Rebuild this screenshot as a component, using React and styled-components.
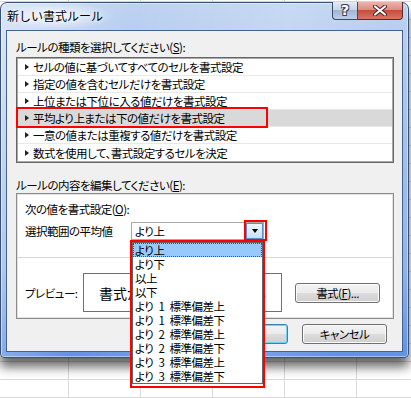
import React from "react";
import styled, { createGlobalStyle } from "styled-components";

const GlobalStyle = createGlobalStyle`
  body {
    margin: 0;
    font-family: "Noto Sans CJK JP", "Noto Sans", sans-serif;
    font-size: 11.5px;
    letter-spacing: -0.5px;
    color: #000;
  }
`;

const Page = styled.div`
  width: 411px;
  height: 398px;
  overflow: hidden;
  box-sizing: border-box;
  padding-top: 2px;
  background-color: #fff;
  background-image: linear-gradient(to right, #dadada 1px, transparent 1px),
    linear-gradient(to bottom, #dadada 1px, transparent 1px);
  background-size: 72px 18px;
  background-position: 68px 1px;
`;

const Window = styled.div`
  width: 409px;
  box-sizing: border-box;
  border: 1px solid #3a5076;
  border-radius: 7px 7px 4px 4px;
  padding: 0 5px 5px 5px;
  background: linear-gradient(100deg, rgba(255, 255, 255, 0.45) 0%, rgba(255, 255, 255, 0) 28%, rgba(255, 255, 255, 0.18) 62%, rgba(255, 255, 255, 0) 85%),
    linear-gradient(to bottom, #bcd2f0 0%, #a3c0ea 40%, #8fb3e8 75%, #5f93e4 100%);
  box-shadow: 0 9px 11px rgba(0, 0, 0, 0.6), inset 0 0 0 1px rgba(255, 255, 255, 0.45);
`;

const TitleBar = styled.div`
  height: 27px;
  display: flex;
  align-items: flex-start;
  padding-left: 1px;
`;

const Title = styled.span`
  line-height: 26px;
  font-size: 12px;
  letter-spacing: 0;
  padding: 0 10px 0 0;
  background: radial-gradient(ellipse at 45% 50%, rgba(255, 255, 255, 0.8) 0%, rgba(255, 255, 255, 0) 72%);
  text-shadow: 0 0 4px #fff;
`;

const CaptionButtons = styled.div`
  margin-left: auto;
  display: flex;
  margin-top: -1px;
`;

const HelpButton = styled.div`
  width: 26px;
  height: 18px;
  box-sizing: border-box;
  border: 1px solid #3b4c6b;
  border-top: none;
  border-radius: 0 0 0 4px;
  background: linear-gradient(#e3ebf6 0%, #c6d5ea 45%, #a2b7d6 50%, #bccde6 100%);
  color: #fff;
  font: bold 14px "DejaVu Sans", sans-serif;
  letter-spacing: 0;
  line-height: 17px;
  text-align: center;
  text-shadow: 1px 1px 0 #3a4660, -1px -1px 0 #3a4660, 1px -1px 0 #3a4660, -1px 1px 0 #3a4660;
`;

const CloseButton = styled.div`
  width: 45px;
  height: 18px;
  box-sizing: border-box;
  border: 1px solid #5c2a2a;
  border-top: none;
  border-left: none;
  border-radius: 0 0 4px 0;
  background: linear-gradient(#ebb4aa 0%, #dc8e80 45%, #c64d3c 50%, #d97566 100%);
  display: flex;
  align-items: center;
  justify-content: center;
`;

const Client = styled.div`
  border: 1px solid #45628f;
  background: #f0f0f0;
  padding: 8px 8px 7px 9px;
`;

const Label = styled.div`
  line-height: 16px;
  height: 16px;
  font-feature-settings: "palt";
  margin-top: ${(p) => p.$top || 0}px;
  white-space: nowrap;
`;

const ListBox = styled.div`
  margin-top: 2px;
  border: 1px solid #666;
  box-shadow: inset 0 0 0 1px #a9a9a9;
  padding: 1px;
  background: #fff;
`;

const RuleRow = styled.div`
  position: relative;
  height: 17px;
  box-sizing: border-box;
  display: flex;
  align-items: center;
  padding-left: 7px;
  border-bottom: ${(p) => (p.$last ? "none" : "1px solid #e8e8e8")};
  background: ${(p) => (p.$selected ? "#d9d9d9" : "#fff")};
  font-feature-settings: "palt";
  white-space: nowrap;
`;

const Arrow = styled.span`
  width: 0;
  height: 0;
  border-left: 4px solid #222;
  border-top: 3.5px solid transparent;
  border-bottom: 3.5px solid transparent;
  margin-right: 4px;
`;

const RedMark = styled.span`
  position: absolute;
  box-sizing: border-box;
  border: 2px solid #ff0000;
  left: ${(p) => p.$left}px;
  top: ${(p) => p.$top}px;
  width: ${(p) => p.$width}px;
  height: ${(p) => p.$height}px;
  z-index: 5;
  pointer-events: none;
`;

const GroupBox = styled.div`
  border: 1px solid #8b8b8b;
  box-shadow: inset 0 0 0 1px #e2e2e2;
  background: #fff;
`;

const GroupTop = styled.div`
  padding: 7px 8px 17px 8px;
  border-bottom: 1px solid #d8d8d8;
`;

const FieldRow = styled.div`
  display: flex;
  align-items: center;
  margin-top: ${(p) => p.$top || 0}px;
`;

const FieldLabel = styled.span`
  width: ${(p) => p.$width}px;
  flex: none;
  font-feature-settings: "palt";
  white-space: nowrap;
  line-height: 16px;
`;

const Combo = styled.div`
  position: relative;
  width: 133px;
  height: 18px;
  box-sizing: border-box;
  border: 1px solid #a9a9a9;
  padding-left: 3px;
  line-height: 16px;
  font-feature-settings: "palt";
`;

const ComboButton = styled.span`
  position: absolute;
  right: 0;
  top: 0;
  width: 17px;
  height: 16px;
  box-sizing: border-box;
  border: 1px solid #5a90d2;
  background: linear-gradient(#eef6fe, #c8e0f7);
  display: flex;
  align-items: center;
  justify-content: center;
`;

const DownArrow = styled.span`
  width: 0;
  height: 0;
  border-top: 4px solid #000;
  border-left: 3.5px solid transparent;
  border-right: 3.5px solid transparent;
`;

const DropFrame = styled.div`
  position: absolute;
  left: -2px;
  top: 17px;
  width: 135px;
  box-sizing: border-box;
  border: 2px solid #ff0000;
  padding-bottom: 2px;
  background: #fff;
  z-index: 10;
`;

const DropList = styled.div`
  border: 1px solid #646464;
  background: #fff;
`;

const DropItem = styled.div`
  height: 14px;
  box-sizing: border-box;
  line-height: 13px;
  padding-left: 1px;
  white-space: nowrap;
  font-feature-settings: "palt";
  word-spacing: 3px;
  background: ${(p) => (p.$active ? "#98c9fd" : "#fff")};
  border: 1px dotted ${(p) => (p.$active ? "#6b4a2f" : "transparent")};
`;

const PreviewRow = styled.div`
  display: flex;
  align-items: center;
  padding: 15px 0 6px 8px;
`;

const PreviewBox = styled.div`
  width: 199px;
  height: 39px;
  box-sizing: border-box;
  border: 1px solid #707070;
  display: flex;
  align-items: center;
  justify-content: center;
  font-size: 14px;
  letter-spacing: 0;
  white-space: nowrap;
  overflow: hidden;
`;

const Button = styled.div`
  width: 85px;
  height: 20px;
  box-sizing: border-box;
  border: 1px solid ${(p) => (p.$default ? "#3c7fb1" : "#707070")};
  border-radius: 3px;
  margin-left: ${(p) => p.$left || 0}px;
  background: linear-gradient(#f3f3f3 0%, #ebebeb 50%, #dddddd 50%, #cfcfcf 100%);
  box-shadow: inset 0 0 0 1px ${(p) => (p.$default ? "#6fd3f7" : "#fbfbfb")};
  display: flex;
  align-items: center;
  justify-content: center;
  line-height: 16px;
  font-feature-settings: "palt";
`;

const ButtonRow = styled.div`
  display: flex;
  justify-content: flex-end;
  gap: 14px;
  margin-top: 5px;
  padding-right: 7px;
`;

const rules = [
  "セルの値に基づいてすべてのセルを書式設定",
  "指定の値を含むセルだけを書式設定",
  "上位または下位に入る値だけを書式設定",
  "平均より上または下の値だけを書式設定",
  "一意の値または重複する値だけを書式設定",
  "数式を使用して、書式設定するセルを決定",
];

const options = [
  "より上",
  "より下",
  "以上",
  "以下",
  "より 1 標準偏差上",
  "より 1 標準偏差下",
  "より 2 標準偏差上",
  "より 2 標準偏差下",
  "より 3 標準偏差上",
  "より 3 標準偏差下",
];

function CloseIcon() {
  return (
    <svg width="14" height="11" viewBox="0 0 14 11">
      <path d="M2 1.5 L12 9.5 M12 1.5 L2 9.5" stroke="#4a2020" strokeWidth="4" strokeLinecap="round" />
      <path d="M2 1.5 L12 9.5 M12 1.5 L2 9.5" stroke="#fff" strokeWidth="2.2" strokeLinecap="round" />
    </svg>
  );
}

export default function App() {
  return (
    <Page>
      <GlobalStyle />
      <Window>
        <TitleBar>
          <Title>新しい書式ルール</Title>
          <CaptionButtons>
            <HelpButton>?</HelpButton>
            <CloseButton>
              <CloseIcon />
            </CloseButton>
          </CaptionButtons>
        </TitleBar>
        <Client>
          <Label>
            ルールの種類を選択してください(<u>S</u>):
          </Label>
          <ListBox>
            {rules.map((rule, i) => (
              <RuleRow key={rule} $selected={i === 3} $last={i === rules.length - 1}>
                <Arrow />
                {rule}
                {i === 3 && <RedMark $left={-2} $top={-3} $width={252} $height={21} />}
              </RuleRow>
            ))}
          </ListBox>
          <Label $top={14}>
            ルールの内容を編集してください(<u>E</u>):
          </Label>
          <GroupBox>
            <GroupTop>
              <Label>
                次の値を書式設定(<u>O</u>):
              </Label>
              <FieldRow $top={5}>
                <FieldLabel $width={106}>選択範囲の平均値</FieldLabel>
                <Combo>
                  より上
                  <ComboButton>
                    <DownArrow />
                  </ComboButton>
                  <RedMark $left={112} $top={-3} $width={23} $height={21} />
                  <DropFrame>
                    <DropList>
                      {options.map((opt, i) => (
                        <DropItem key={opt} $active={i === 0}>
                          {opt}
                        </DropItem>
                      ))}
                    </DropList>
                  </DropFrame>
                </Combo>
              </FieldRow>
            </GroupTop>
            <PreviewRow>
              <FieldLabel $width={58}>プレビュー:</FieldLabel>
              <PreviewBox>書式が設定されていません</PreviewBox>
              <Button $left={13}>
                書式(<u>F</u>)...
              </Button>
            </PreviewRow>
          </GroupBox>
          <ButtonRow>
            <Button $default>OK</Button>
            <Button>キャンセル</Button>
          </ButtonRow>
        </Client>
      </Window>
    </Page>
  );
}
